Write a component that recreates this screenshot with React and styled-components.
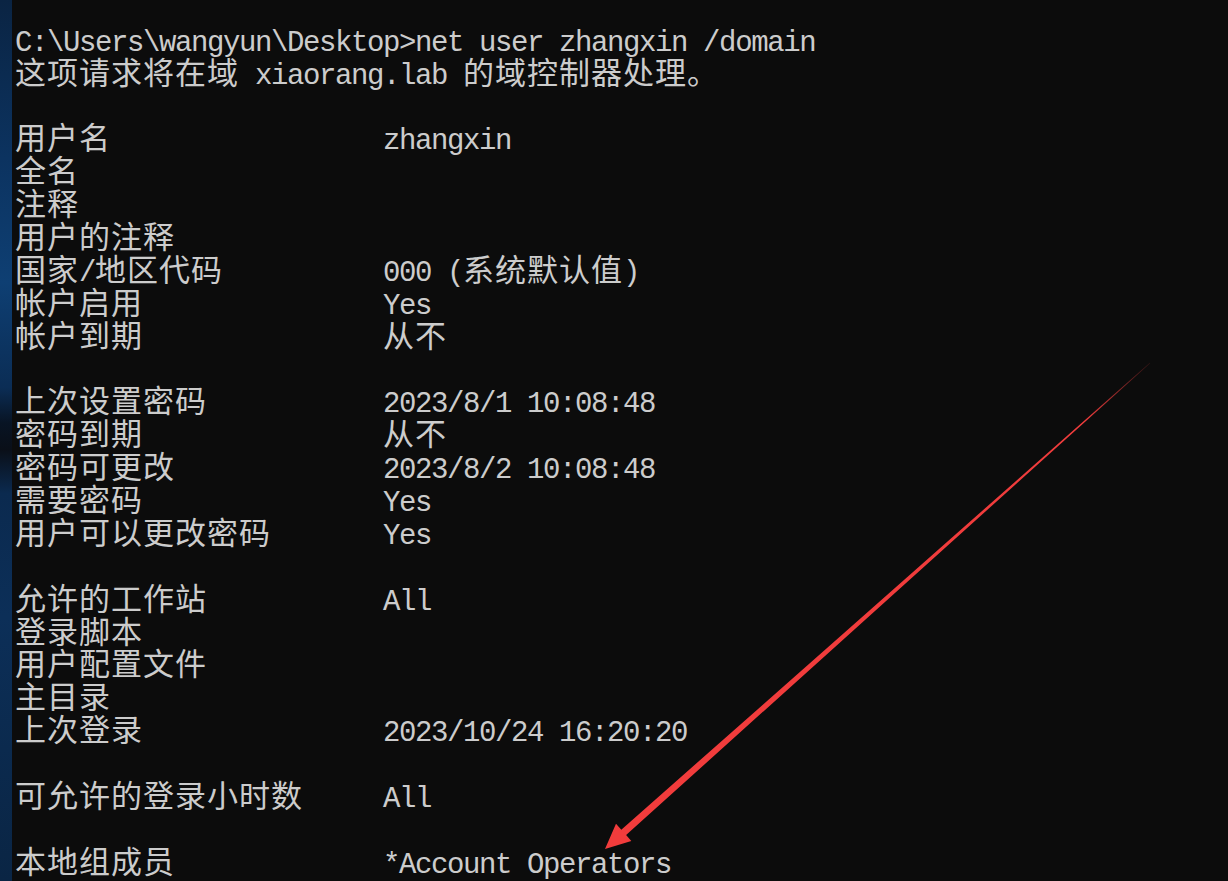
import React from "react";
import styled, { createGlobalStyle } from "styled-components";

const Global = createGlobalStyle`
  html, body { margin: 0; padding: 0; background: #0c0c0c; }
  body { overflow: hidden; }
`;

const Screen = styled.div`
  position: relative;
  display: flex;
  width: 1228px;
  height: 881px;
  overflow: hidden;
  background: #0c0c0c;
`;

const Strip = styled.div`
  flex: 0 0 12px;
  background: linear-gradient(
    180deg,
    #0a2443 0%,
    #0c3360 18%,
    #0e3f73 32%,
    #0b2d55 44%,
    #081424 48%,
    #0a0f18 51%,
    #0b2a4f 56%,
    #0c2f58 70%,
    #0a2544 100%
  );
`;

const Console = styled.div`
  flex: 1;
  padding: 27.8px 0 0 3px;
  color: #cccccc;
  font-family: "Liberation Mono", monospace;
  font-size: 29px;
  line-height: 32.88px;
`;

const Row = styled.div`
  height: 32.88px;
  white-space: pre;
  display: ${(p) => (p.$pair ? "grid" : "block")};
  grid-template-columns: 368px 1fr;
`;

const Cell = styled.div`
  white-space: pre;
  height: 32.88px;
`;

const Run = styled.span`
  line-height: 0;
  font-family: ${(p) =>
    p.$cjk ? '"Noto Sans CJK SC", sans-serif' : '"Liberation Mono", monospace'};
  font-size: ${(p) => (p.$cjk ? "31px" : "29px")};
  letter-spacing: ${(p) => (p.$cjk ? "1px" : "-1.4px")};
`;

const Overlay = styled.svg`
  position: absolute;
  left: 0;
  top: 0;
  pointer-events: none;
`;

const CJK = /([\u3000-\u303f\u4e00-\u9fff\uff00-\uffef]+)/;

function Text({ children }) {
  return children
    .split(CJK)
    .filter((s) => s.length)
    .map((s, i) => (
      <Run key={i} $cjk={CJK.test(s)}>
        {s}
      </Run>
    ));
}

const lines = [
  { text: "C:\\Users\\wangyun\\Desktop>net user zhangxin /domain" },
  { text: "这项请求将在域 xiaorang.lab 的域控制器处理。" },
  null,
  { label: "用户名", value: "zhangxin" },
  { label: "全名", value: "" },
  { label: "注释", value: "" },
  { label: "用户的注释", value: "" },
  { label: "国家/地区代码", value: "000 (系统默认值)" },
  { label: "帐户启用", value: "Yes" },
  { label: "帐户到期", value: "从不" },
  null,
  { label: "上次设置密码", value: "2023/8/1 10:08:48" },
  { label: "密码到期", value: "从不" },
  { label: "密码可更改", value: "2023/8/2 10:08:48" },
  { label: "需要密码", value: "Yes" },
  { label: "用户可以更改密码", value: "Yes" },
  null,
  { label: "允许的工作站", value: "All" },
  { label: "登录脚本", value: "" },
  { label: "用户配置文件", value: "" },
  { label: "主目录", value: "" },
  { label: "上次登录", value: "2023/10/24 16:20:20" },
  null,
  { label: "可允许的登录小时数", value: "All" },
  null,
  { label: "本地组成员", value: "*Account Operators" },
];

function Arrow() {
  const S = [1150, 363];
  const T = [605, 849];
  const dx = T[0] - S[0];
  const dy = T[1] - S[1];
  const len = Math.hypot(dx, dy);
  const u = [dx / len, dy / len];
  const n = [u[1], -u[0]];
  const headLen = 25;
  const headW = 11.5;
  const shaftW = 3.6;
  const B = [T[0] - headLen * u[0], T[1] - headLen * u[1]];
  const pt = (p, k) => [p[0] + k * n[0], p[1] + k * n[1]];
  const pts = [
    pt(S, 0.3),
    pt(B, shaftW),
    pt(B, headW),
    T,
    pt(B, -headW),
    pt(B, -shaftW),
    pt(S, -0.3),
  ]
    .map((p) => p.map((v) => v.toFixed(1)).join(","))
    .join(" ");
  return (
    <Overlay width="1228" height="881" viewBox="0 0 1228 881">
      <defs>
        <linearGradient
          id="fade"
          gradientUnits="userSpaceOnUse"
          x1={S[0]}
          y1={S[1]}
          x2={T[0]}
          y2={T[1]}
        >
          <stop offset="0" stopColor="#f03c3c" stopOpacity="0.15" />
          <stop offset="0.12" stopColor="#f03c3c" stopOpacity="1" />
          <stop offset="1" stopColor="#f23c3c" stopOpacity="1" />
        </linearGradient>
      </defs>
      <polygon points={pts} fill="url(#fade)" />
    </Overlay>
  );
}

export default function App() {
  return (
    <Screen>
      <Global />
      <Strip />
      <Console>
        {lines.map((l, i) => {
          if (!l) return <Row key={i} />;
          if (l.text !== undefined)
            return (
              <Row key={i}>
                <Text>{l.text}</Text>
              </Row>
            );
          return (
            <Row key={i} $pair>
              <Cell>
                <Text>{l.label}</Text>
              </Cell>
              <Cell>
                <Text>{l.value}</Text>
              </Cell>
            </Row>
          );
        })}
      </Console>
      <Arrow />
    </Screen>
  );
}
